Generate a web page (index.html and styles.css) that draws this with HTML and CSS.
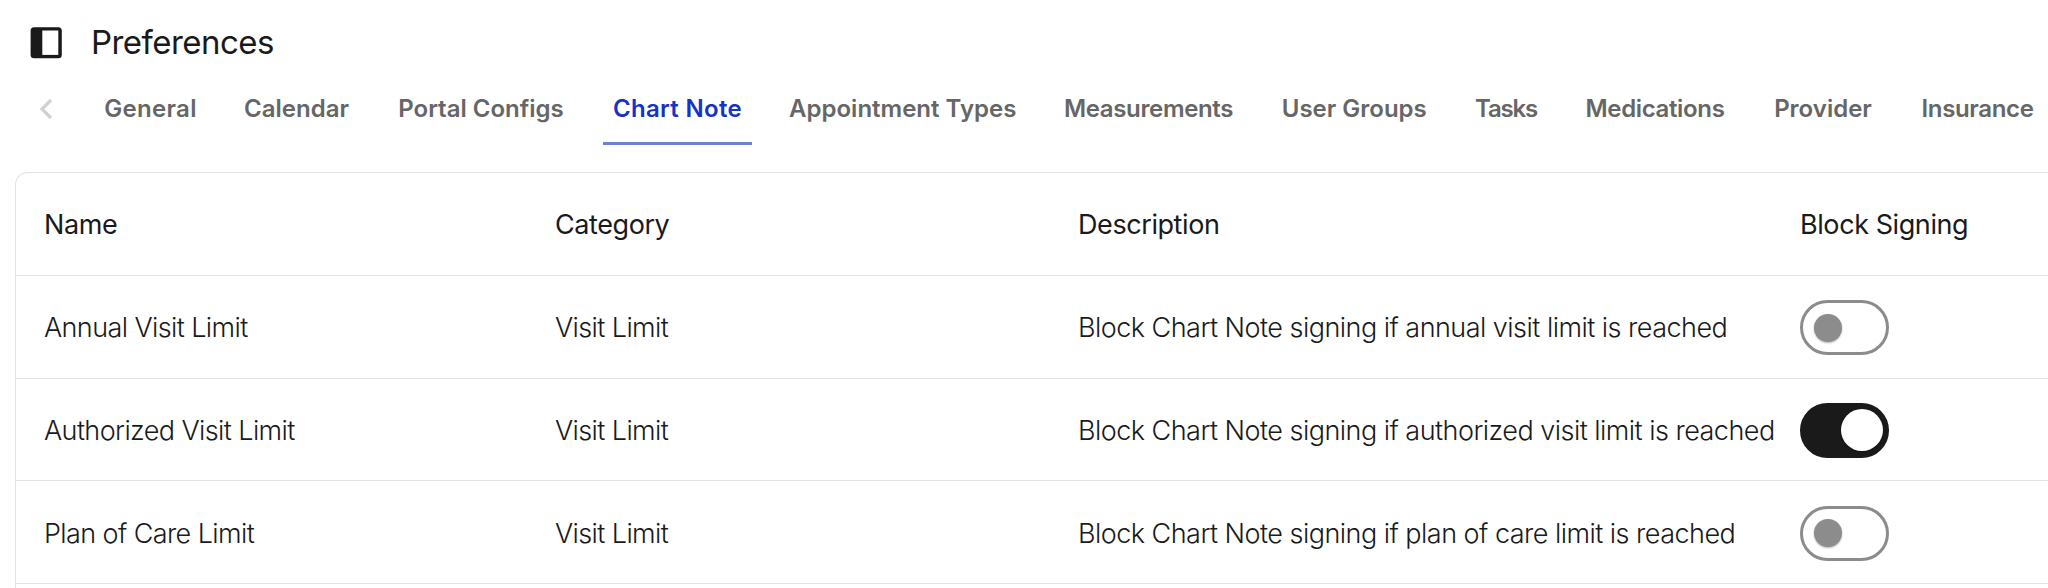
FILE: index.html
```html
<!DOCTYPE html>
<html lang="en">

<head>
    <meta charset="UTF-8">
    <meta name="viewport" content="width=device-width, initial-scale=1.0">
    <title>Preferences</title>
    <link rel="stylesheet" href="styles.css">
</head>

<body>

    <div class="header">
        <svg class="sidebar-icon" viewBox="0 0 32 32">
            <rect x="0.6" y="0.2" width="31.2" height="31" rx="3.5" fill="#1a1a1a" />
            <rect x="12.3" y="3.5" width="16" height="24.4" fill="#fff" />
        </svg>
        <h1>Preferences</h1>
    </div>

    <div class="tabs">
        <svg class="arrow-icon" viewBox="0 0 14 22">
            <path d="M12 2 L3 11 L12 20" fill="none" stroke="#d1d1d1" stroke-width="3.2" />
        </svg>
        <div class="tab-list">
            <div class="tab loose">General</div>
            <div class="tab">Calendar</div>
            <div class="tab">Portal Configs</div>
            <div class="tab loose active">Chart Note</div>
            <div class="tab">Appointment Types</div>
            <div class="tab tight">Measurements</div>
            <div class="tab">User Groups</div>
            <div class="tab tighter">Tasks</div>
            <div class="tab tight">Medications</div>
            <div class="tab">Provider</div>
            <div class="tab tight">Insurance</div>
        </div>
    </div>

    <div class="table">
        <div class="row head">
            <div>Name</div>
            <div>Category</div>
            <div>Description</div>
            <div>Block Signing</div>
        </div>
        <div class="row">
            <div>Annual Visit Limit</div>
            <div>Visit Limit</div>
            <div class="description">Block Chart Note signing if annual visit limit is reached</div>
            <div class="switch"><span class="knob"></span></div>
        </div>
        <div class="row">
            <div>Authorized Visit Limit</div>
            <div>Visit Limit</div>
            <div class="description">Block Chart Note signing if authorized visit limit is reached</div>
            <div class="switch on"><span class="knob"></span></div>
        </div>
        <div class="row">
            <div>Plan of Care Limit</div>
            <div>Visit Limit</div>
            <div class="description">Block Chart Note signing if plan of care limit is reached</div>
            <div class="switch"><span class="knob"></span></div>
        </div>
    </div>

</body>

</html>
```
FILE: styles.css
```css
* {
    margin: 0;
    padding: 0;
    box-sizing: border-box;
}

body {
    width: 2048px;
    height: 588px;
    overflow: hidden;
    background-color: #fff;
    color: #1a1a1a;
    font-family: Inter, "Liberation Sans", sans-serif;
}

.header {
    display: flex;
    align-items: center;
    height: 86px;
    padding-left: 30px;
}

.sidebar-icon {
    width: 32px;
    height: 32px;
}

.header h1 {
    margin-left: 29px;
    padding-bottom: 2px;
    font-size: 33px;
    font-weight: 400;
    letter-spacing: -0.55px;
}

.tabs {
    display: flex;
    height: 86px;
    padding-left: 39px;
}

.arrow-icon {
    width: 14px;
    height: 22px;
    margin-top: 12px;
}

.tab-list {
    display: grid;
    grid-template-columns: 111px 125px 188px 149px 245.5px 190px 165.5px 82px 160px 120px 133px;
    gap: 28px;
    height: 59px;
    margin-left: 42px;
}

.tab {
    height: 59px;
    line-height: 45px;
    border-bottom: 3px solid transparent;
    color: #666;
    font-size: 24px;
    font-weight: 600;
    text-align: center;
    white-space: nowrap;
}

.tab.loose {
    letter-spacing: 0.3px;
}

.tab.tight {
    letter-spacing: -0.35px;
}

.tab.tighter {
    letter-spacing: -1.2px;
}

.tab.active {
    color: #1733c6;
    border-bottom-color: #6c80d9;
}

.table {
    height: 440px;
    margin-left: 15px;
    border-top: 1px solid #e2e2e2;
    border-left: 1px solid #e2e2e2;
    border-top-left-radius: 13px;
}

.row {
    display: grid;
    grid-template-columns: 511px 523px 722px 1fr;
    align-items: center;
    height: 102.75px;
    padding-top: 2px;
    padding-left: 28px;
    border-bottom: 1px solid #e2e2e2;
    font-size: 27px;
    font-weight: 300;
    letter-spacing: -0.6px;
    white-space: nowrap;
}

.row.head {
    font-weight: 400;
    letter-spacing: -0.42px;
}

.row .description {
    letter-spacing: -0.53px;
}

.switch {
    display: flex;
    align-items: center;
    width: 89px;
    height: 55px;
    padding-left: 11px;
    border: 3px solid #8c8c8c;
    border-radius: 28px;
}

.knob {
    width: 28px;
    height: 28px;
    border-radius: 50%;
    background-color: #8c8c8c;
    box-shadow: 0 1px 2px rgba(0, 0, 0, 0.3);
}

.switch.on {
    padding-left: 38px;
    border-color: #1a1a1a;
    background-color: #1a1a1a;
}

.switch.on .knob {
    width: 42px;
    height: 42px;
    background-color: #fff;
}
```
